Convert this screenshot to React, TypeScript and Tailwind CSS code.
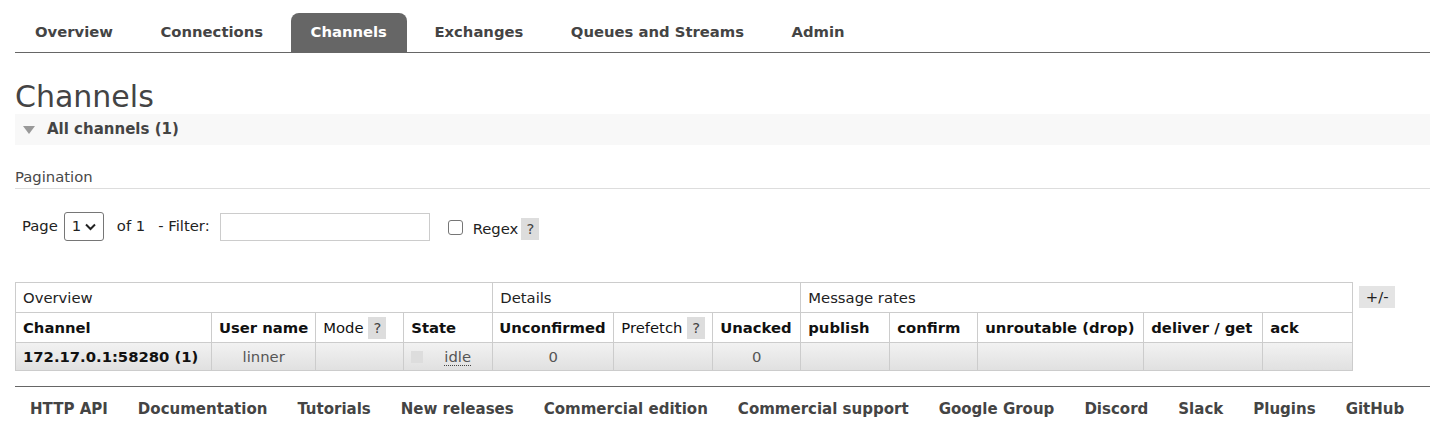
import React from 'react';

const tabs = ['Overview', 'Connections', 'Channels', 'Exchanges', 'Queues and Streams', 'Admin'];
const footerLinks = [
  'HTTP API',
  'Documentation',
  'Tutorials',
  'New releases',
  'Commercial edition',
  'Commercial support',
  'Google Group',
  'Discord',
  'Slack',
  'Plugins',
  'GitHub',
];

function Help() {
  return <span className="inline-block w-[18px] bg-[#dddddd] text-center font-normal leading-[22px] text-[#444]">?</span>;
}

export default function App() {
  const cell = 'border border-[#cccccc] px-[7px] whitespace-nowrap';
  return (
    <div className="min-h-screen bg-white pl-[15px] font-['DejaVu_Sans',Verdana,sans-serif] text-[14.8px] text-[#484848]">
      <nav className="flex h-[53px] items-end border-b border-[#666]">
        <ul className="flex">
          {tabs.map((t) => {
            const active = t === 'Channels';
            return (
              <li
                key={t}
                className={`mr-[7.5px] px-[20px] pb-[11px] pt-[10px] text-[14.8px] font-bold leading-[18px] ${
                  active ? 'rounded-t-[8px] bg-[#666] text-white' : 'text-[#444]'
                }`}
              >
                {t}
              </li>
            );
          })}
        </ul>
      </nav>

      <h1 className="mt-[27px] text-[30px] leading-[34px] text-[#444]">Channels</h1>

      <div className="flex h-[31px] items-center bg-[#f8f8f8] pl-[8px]">
        <span className="mr-[12px] inline-block h-0 w-0 border-x-[6px] border-t-[8px] border-x-transparent border-t-[#999]" />
        <span className="text-[15px] font-bold text-[#444]">All channels (1)</span>
      </div>

      <div className="mt-[23px] border-b border-[#dddddd] pb-[2px] leading-[18px] text-[#484848]">Pagination</div>

      <div className="mt-[23px] flex items-center pl-[7px] text-[#222]">
        <span>Page</span>
        <div className="ml-[6px] flex h-[29px] w-[40px] items-center justify-between rounded-[3px] border border-[#767676] px-[7px]">
          <span>1</span>
          <svg width="11" height="8" viewBox="0 0 11 8" fill="none" stroke="#222" strokeWidth="2">
            <path d="M1 1.5 L5.5 6 L10 1.5" />
          </svg>
        </div>
        <span className="ml-[13px]">of 1</span>
        <span className="ml-[13px]">- Filter:</span>
        <div className="ml-[10px] h-[28px] w-[210px] border border-[#cccccc]" />
        <div className="ml-[18px] mt-[1px] h-[15px] w-[15px] rounded-[3px] border border-[#767676]" />
        <span className="ml-[10px] mt-[6px]">Regex</span>
        <span className="ml-[3px] mt-[6px]">
          <Help />
        </span>
      </div>

      <div className="mt-[41px] flex items-start">
        <table className="border-collapse text-left leading-[18px]">
          <thead>
            <tr className="h-[30px] text-[#222]">
              <th colSpan={4} className={`${cell} font-normal`}>Overview</th>
              <th colSpan={3} className={`${cell} font-normal`}>Details</th>
              <th colSpan={5} className={`${cell} font-normal`}>Message rates</th>
            </tr>
            <tr className="h-[30px] text-[#111]">
              <th className={`${cell} w-[196px]`}>Channel</th>
              <th className={`${cell} w-[103px]`}>User name</th>
              <th className={`${cell} w-[88px] font-normal`}>
                Mode <Help />
              </th>
              <th className={`${cell} w-[89px]`}>State</th>
              <th className={`${cell} w-[121px] !px-[6px]`}>Unconfirmed</th>
              <th className={`${cell} w-[99px] font-normal`}>
                Prefetch <Help />
              </th>
              <th className={`${cell} w-[88px]`}>Unacked</th>
              <th className={`${cell} w-[89px]`}>publish</th>
              <th className={`${cell} w-[88px]`}>confirm</th>
              <th className={`${cell} w-[166px]`}>unroutable (drop)</th>
              <th className={`${cell} w-[119px]`}>deliver / get</th>
              <th className={`${cell} w-[90px]`}>ack</th>
            </tr>
          </thead>
          <tbody>
            <tr className="h-[28px] bg-gradient-to-b from-[#f2f2f2] to-[#e0e0e0] text-[#555]">
              <td className={`${cell} font-bold text-[#111]`}>172.17.0.1:58280 (1)</td>
              <td className={`${cell} text-center`}>linner</td>
              <td className={cell}></td>
              <td className={cell}>
                <div className="flex items-center">
                  <span className="inline-block h-[12px] w-[12px] bg-[#dddddd]" />
                  <span className="ml-[21px] border-b border-dotted border-[#444] leading-[17px]">idle</span>
                </div>
              </td>
              <td className={`${cell} text-center`}>0</td>
              <td className={cell}></td>
              <td className={`${cell} text-center`}>0</td>
              <td className={cell}></td>
              <td className={cell}></td>
              <td className={cell}></td>
              <td className={cell}></td>
              <td className={cell}></td>
            </tr>
          </tbody>
        </table>
        <span className="ml-[6px] mt-[4px] bg-[#e4e4e4] px-[6.5px] leading-[22px] text-[#222]">+/-</span>
      </div>

      <footer className="mt-[15px] border-t border-[#666] pt-[11px]">
        <ul className="flex pl-[15px] font-['DejaVu_Sans_Condensed','Liberation_Sans',Arial,sans-serif] text-[16.7px] font-bold leading-[20px] text-[#444]">
          {footerLinks.map((l) => (
            <li key={l} className="mr-[30px] shrink-0 whitespace-nowrap">
              {l}
            </li>
          ))}
        </ul>
      </footer>
    </div>
  );
}
